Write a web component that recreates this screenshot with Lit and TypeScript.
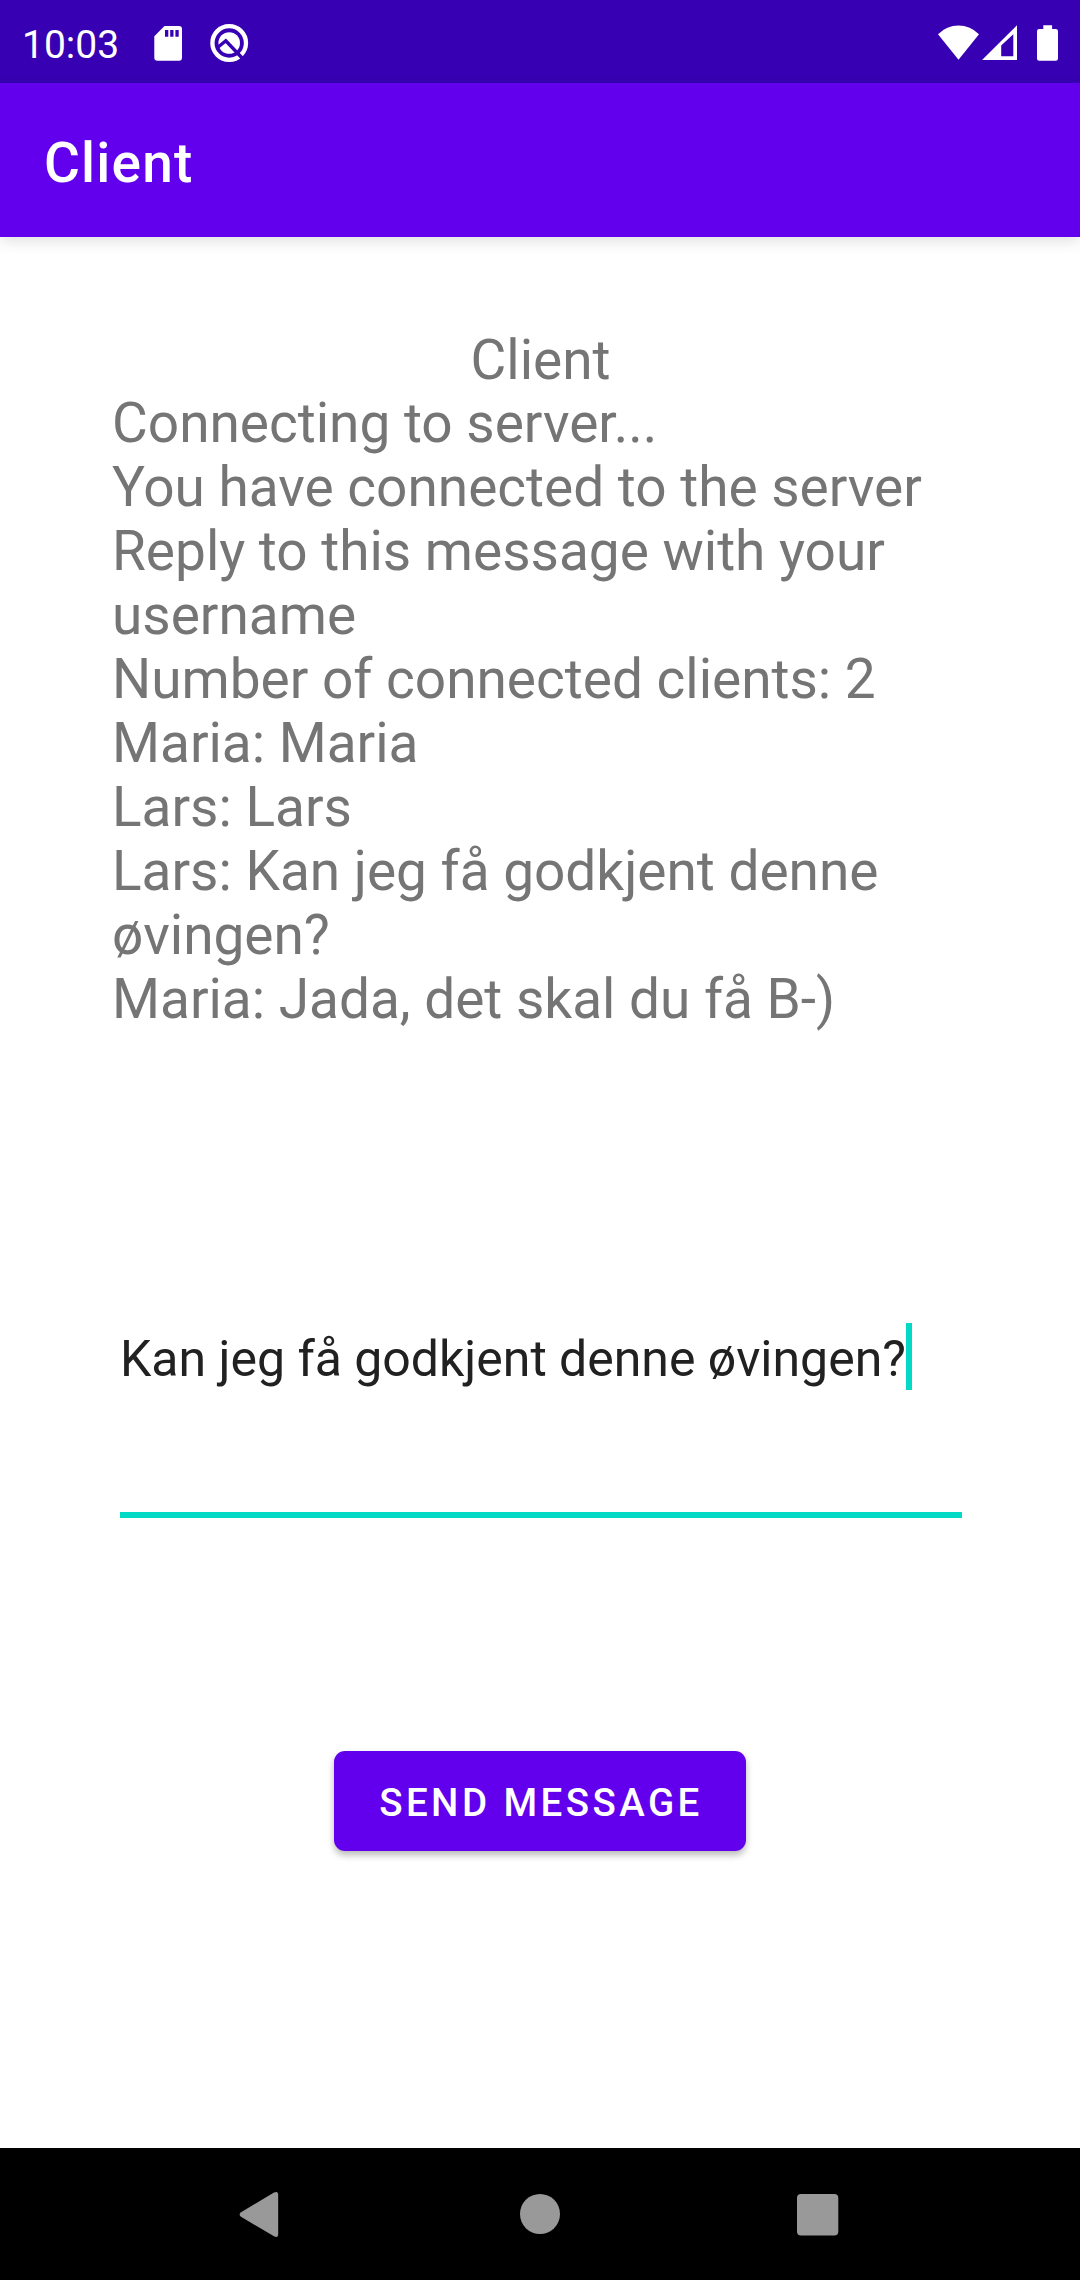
import { LitElement, html, css } from "lit";
import { customElement, state } from "lit/decorators.js";

@customElement("status-bar")
class StatusBar extends LitElement {
  static styles = css`
    :host {
      display: flex;
      align-items: flex-start;
      justify-content: space-between;
      height: 83px;
      box-sizing: border-box;
      padding: 22px 22px 0;
      background: #3700b3;
      color: #fff;
    }
    .side { display: flex; align-items: flex-start; }
    .time {
      font-size: 39px;
      line-height: 46px;
      width: 132px;
      white-space: nowrap;
    }
    svg { display: block; fill: #fff; flex: none; }
    .sd { margin-right: 28px; }
    .wifi { margin-right: 3px; }
    .signal { margin-right: 20px; }
  `;
  render() {
    return html`
      <div class="side">
        <div class="time">10:03</div>
        <svg class="sd" width="28" height="40" viewBox="154 22 28 40">
          <path fill-rule="evenodd" d="M164.500 26H179q3 0 3 3V57.500q0 3.200-3 3.200H157.500q-3.200 0-3.200-3.200V36.300ZM165 30v6.700h3.300V30ZM170.200 30v6.700h3.300V30ZM175.400 30v6.700h3.300V30Z"/>
        </svg>
        <svg width="40" height="42" viewBox="210 22 40 42">
          <circle cx="229.200" cy="43" r="16.800" fill="none" stroke="#fff" stroke-width="4.300"/>
          <circle cx="229.200" cy="43" r="10.800"/>
          <path d="M217 48 225.800 40.800 244.500 60.500" fill="none" stroke="#3700b3" stroke-width="3.400"/>
        </svg>
      </div>
      <div class="side">
        <svg class="wifi" width="41" height="40" viewBox="938 22 41 40">
          <path d="M938 34.200Q946.700 25.500 958.500 25.500T979 34.200L958.500 59.800Z"/>
        </svg>
        <svg class="signal" width="35" height="40" viewBox="982 22 35 40">
          <path fill-rule="evenodd" d="M982 60 1017 25.200V60ZM1001.200 45.500V56.200H1013.300V34.200Z"/>
        </svg>
        <svg width="21" height="40" viewBox="1037 22 21 40">
          <path d="M1043.300 25.200h8.800V29h3.700q2.200 0 2.200 2.200V58.600q0 2.200-2.200 2.200H1039.200q-2.200 0-2.200-2.200V31.200q0-2.200 2.200-2.200h4.100Z"/>
        </svg>
      </div>
    `;
  }
}

@customElement("nav-bar")
class NavBar extends LitElement {
  static styles = css`
    :host {
      display: flex;
      justify-content: space-between;
      height: 132px;
      box-sizing: border-box;
      padding: 42px 238px 0 236px;
      background: #000;
    }
    svg { display: block; fill: #999; }
  `;
  render() {
    return html`
      <svg width="48" height="48" viewBox="236 2190 48 48">
        <path d="M274 2192.600Q278.200 2190.500 278.200 2195V2234Q278.200 2238.500 274 2236.300L241 2216.800Q238.300 2214.500 241 2212.200Z"/>
      </svg>
      <svg width="48" height="48" viewBox="515 2190 48 48">
        <circle cx="540" cy="2214" r="20"/>
      </svg>
      <svg width="48" height="48" viewBox="794 2190 48 48">
        <rect x="797" y="2194" width="41.300" height="41.500" rx="4"/>
      </svg>
    `;
  }
}

@customElement("app-root")
class AppRoot extends LitElement {
  static styles = css`
    :host {
      display: flex;
      flex-direction: column;
      height: 2280px;
      background: #fff;
      font-family: Roboto, "Liberation Sans", sans-serif;
    }
    .toolbar {
      display: flex;
      align-items: center;
      height: 154px;
      box-sizing: border-box;
      padding: 5px 44px 0;
      background: #6200ee;
      color: #fff;
      font-size: 55px;
      font-weight: 500;
      letter-spacing: 1.2px;
      box-shadow: 0 4px 14px rgba(0, 0, 0, 0.12);
    }
    .content {
      flex: 1;
      display: flex;
      flex-direction: column;
      align-items: center;
      padding-top: 91px;
    }
    .heading, .log {
      font-size: 55px;
      line-height: 64px;
      letter-spacing: -0.02px;
      color: #757575;
    }
    .heading { height: 63px; padding-left: 1px; }
    .log {
      width: 856px;
      height: 856px;
    }
    .line { white-space: pre-line; }
    .field {
      display: flex;
      width: 842px;
      height: 271px;
      box-sizing: border-box;
      margin: 0 -2px 0 0;
      padding-top: 76px;
      border-bottom: 6px solid #03dac5;
      align-items: flex-start;
    }
    .value {
      font-size: 50px;
      line-height: 67px;
      letter-spacing: -0.02px;
      padding-top: 3px;
      color: #212121;
      white-space: nowrap;
    }
    .caret { width: 6px; height: 67px; background: #03dac5; }
    .send {
      margin-top: 233px;
      width: 412px;
      height: 100px;
      padding: 2px 0 0 2px;
      border: 0;
      border-radius: 11px;
      background: #6200ee;
      color: #fff;
      font: 500 38.5px Roboto, "Liberation Sans", sans-serif;
      letter-spacing: 0.0892857em;
      white-space: nowrap;
      box-shadow: 0 4px 7px rgba(0, 0, 0, 0.28);
    }
  `;

  @state() private messages = [
    "Connecting to server...",
    "You have connected to the server",
    "Reply to this message with your\nusername",
    "Number of connected clients: 2",
    "Maria: Maria",
    "Lars: Lars",
    "Lars: Kan jeg få godkjent denne\nøvingen?",
    "Maria: Jada, det skal du få B-)",
  ];
  @state() private draft = "Kan jeg få godkjent denne øvingen?";

  render() {
    return html`
      <status-bar></status-bar>
      <header class="toolbar">Client</header>
      <main class="content">
        <div class="heading">Client</div>
        <div class="log">${this.messages.map((m) => html`<div class="line">${m}</div>`)}</div>
        <div class="field"><span class="value">${this.draft}</span><span class="caret"></span></div>
        <button class="send">SEND MESSAGE</button>
      </main>
      <nav-bar></nav-bar>
    `;
  }
}
